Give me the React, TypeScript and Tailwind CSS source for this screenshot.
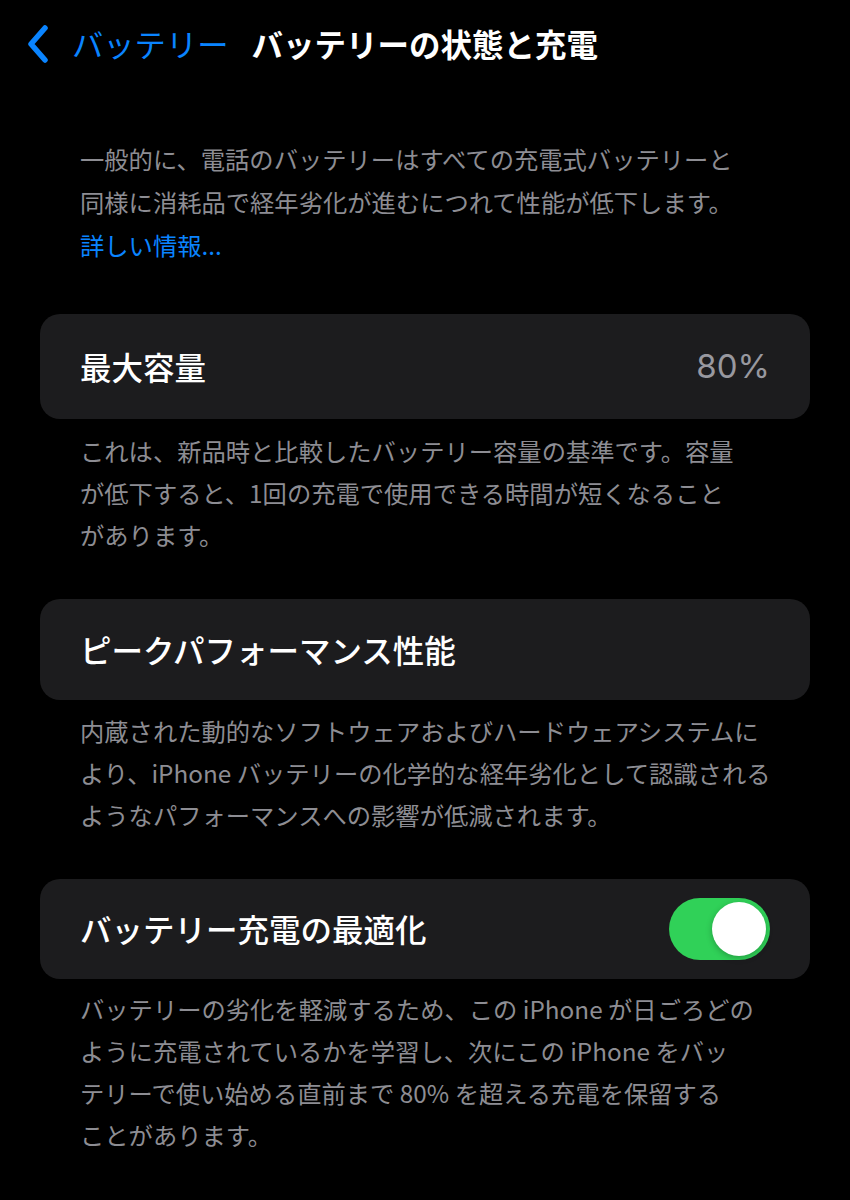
import React from "react";

const font = { fontFamily: '"Noto Sans CJK JP", "Noto Sans", sans-serif' };

function Footer({ lines, className = "" }: { lines: React.ReactNode[]; className?: string }) {
  return (
    <div className={`px-[80px] text-[24.3px] leading-[42px] text-[#8d8d93] whitespace-nowrap ${className}`}>
      {lines.map((l, i) => (
        <div key={i}>{l}</div>
      ))}
    </div>
  );
}

export default function App() {
  return (
    <div className="w-[850px] h-[1200px] bg-black overflow-hidden" style={font}>
      {/* Header */}
      <div className="h-[87px] flex items-center">
        <div className="pl-[27px] flex items-center">
          <svg width="22" height="38" viewBox="0 0 22 38" fill="none">
            <path d="M18 3 L4 19 L18 35" stroke="#0a84ff" strokeWidth="5.5" strokeLinecap="round" strokeLinejoin="round" />
          </svg>
        </div>
        <span className="ml-[23px] text-[31.3px] text-[#0a84ff] leading-none">バッテリー</span>
        <span className="ml-[23px] text-[31.5px] font-bold text-white leading-none">バッテリーの状態と充電</span>
      </div>

      {/* Intro */}
      <div className="mt-[50px] px-[80px] text-[24.3px] leading-[43px] text-[#8d8d93] whitespace-nowrap">
        <div>一般的に、電話のバッテリーはすべての充電式バッテリーと</div>
        <div>同様に消耗品で経年劣化が進むにつれて性能が低下します。</div>
        <div className="text-[#0a84ff]">詳しい情報...</div>
      </div>

      {/* Card 1 */}
      <div className="mt-[48px] mx-[40px] h-[105px] rounded-[20px] bg-[#1c1c1e] flex items-center justify-between px-[40px]">
        <span className="text-[31.5px] font-medium text-white">最大容量</span>
        <span className="text-[33px] text-[#98989f]" style={{ fontFamily: '"Inter", "Noto Sans", sans-serif' }}>80%</span>
      </div>
      <Footer
        className="mt-[11px]"
        lines={[
          "これは、新品時と比較したバッテリー容量の基準です。容量",
          "が低下すると、1回の充電で使用できる時間が短くなること",
          "があります。",
        ]}
      />

      {/* Card 2 */}
      <div className="mt-[43px] mx-[40px] h-[101px] rounded-[20px] bg-[#1c1c1e] flex items-center px-[40px]">
        <span className="text-[31.5px] font-medium text-white">ピークパフォーマンス性能</span>
      </div>
      <Footer
        className="mt-[10px]"
        lines={[
          "内蔵された動的なソフトウェアおよびハードウェアシステムに",
          "より、iPhone バッテリーの化学的な経年劣化として認識される",
          "ようなパフォーマンスへの影響が低減されます。",
        ]}
      />

      {/* Card 3 */}
      <div className="mt-[43px] mx-[40px] h-[100px] rounded-[20px] bg-[#1c1c1e] flex items-center justify-between pl-[40px] pr-[40px]">
        <span className="text-[31.5px] font-medium text-white">バッテリー充電の最適化</span>
        <div className="w-[101px] h-[62px] rounded-full bg-[#30d158] p-[4px] flex justify-end">
          <div className="w-[54px] h-[54px] rounded-full bg-white shadow-[0_2px_6px_rgba(0,0,0,0.25)]" />
        </div>
      </div>
      <Footer
        className="mt-[9px]"
        lines={[
          "バッテリーの劣化を軽減するため、この iPhone が日ごろどの",
          "ように充電されているかを学習し、次にこの iPhone をバッ",
          "テリーで使い始める直前まで 80% を超える充電を保留する",
          "ことがあります。",
        ]}
      />
    </div>
  );
}
